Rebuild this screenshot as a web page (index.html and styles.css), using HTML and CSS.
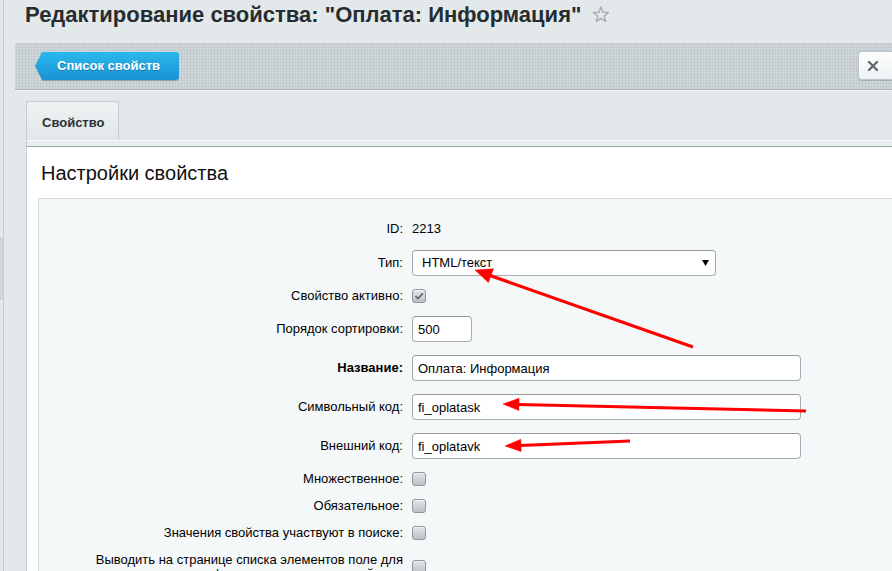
FILE: index.html
```html
<!DOCTYPE html>
<html lang="ru">
<head>
<meta charset="utf-8">
<title>Редактирование свойства</title>
<link rel="stylesheet" href="styles.css">
</head>
<body>
<div class="layout">
  <div class="edge"><div class="edge-mark"></div></div>
  <div class="main">
    <h1 class="title"><span class="title-text">Редактирование свойства: "Оплата: Информация"</span><svg class="star" width="18" height="18" viewBox="0 0 18 18"><polygon points="9,1 11,6.25 16.61,6.53 12.23,10.05 13.7,15.47 9,12.4 4.3,15.47 5.77,10.05 1.39,6.53 7,6.25" fill="none" stroke="#a3acb1" stroke-width="1.4" stroke-linejoin="round"/></svg></h1>

    <div class="toolbar">
      <a class="btn-back">Список свойств</a>
      <div class="btn-close">
        <svg width="12" height="12" viewBox="0 0 12 12"><path d="M2 2 L10 10 M10 2 L2 10" stroke="#5d6569" stroke-width="2.2" stroke-linecap="round"/></svg>
        <span class="btn-close-mark"></span>
      </div>
    </div>

    <div class="tabs"><div class="tab">Свойство</div></div>
    <div class="tab-strip"></div>

    <div class="panel">
      <h2 class="panel-title">Настройки свойства</h2>
      <div class="form-box">
        <div class="form">
          <div class="label">ID:</div>
          <div class="value">2213</div>

          <div class="label">Тип:</div>
          <div class="value"><div class="select">HTML/текст<svg class="select-arrow" width="7" height="6" viewBox="0 0 7 6"><polygon points="0,0 7,0 3.5,6" fill="#000"/></svg></div></div>

          <div class="label">Свойство активно:</div>
          <div class="value"><span class="cb cb-checked"><svg width="14" height="14" viewBox="0 0 14 14"><polyline points="3.5,7.2 6,9.6 10.8,4.4" fill="none" stroke="#5b656a" stroke-width="1.6"/></svg></span></div>

          <div class="label">Порядок сортировки:</div>
          <div class="value"><input class="input input-short" type="text" value="500" readonly></div>

          <div class="label label-bold">Название:</div>
          <div class="value"><input class="input input-wide" type="text" value="Оплата: Информация" readonly></div>

          <div class="label">Символьный код:</div>
          <div class="value"><input class="input input-wide" type="text" value="fi_oplatask" readonly></div>

          <div class="label">Внешний код:</div>
          <div class="value"><input class="input input-wide" type="text" value="fi_oplatavk" readonly></div>

          <div class="label">Множественное:</div>
          <div class="value"><span class="cb"></span></div>

          <div class="label">Обязательное:</div>
          <div class="value"><span class="cb"></span></div>

          <div class="label">Значения свойства участвуют в поиске:</div>
          <div class="value"><span class="cb"></span></div>

          <div class="label">Выводить на странице списка элементов поле для фильтрации по этому свойству:</div>
          <div class="value"><span class="cb"></span></div>
        </div>
      </div>
    </div>
  </div>
</div>

<svg class="annot" width="892" height="571" viewBox="0 0 892 571">
  <g fill="#ff0000" stroke="#ff0000">
    <line x1="693" y1="347" x2="490" y2="275.5" stroke-width="3.2"/>
    <polygon points="475,270 493.5,268.8 488.4,282.6" stroke-width="0.5"/>
    <line x1="806" y1="411" x2="518" y2="404.4" stroke-width="3"/>
    <polygon points="503,404 519.1,398.2 518.9,410.6" stroke-width="0.5"/>
    <line x1="630" y1="441" x2="520" y2="445.4" stroke-width="3"/>
    <polygon points="505,446 521.2,451.6 520.8,439.2" stroke-width="0.5"/>
  </g>
</svg>
</body>
</html>
```
FILE: styles.css
```css
html, body {
  margin: 0;
  padding: 0;
  overflow: hidden;
}

body {
  width: 892px;
  height: 571px;
  position: relative;
  background: #e3e9eb;
  font-family: "Liberation Sans", Arial, sans-serif;
  font-size: 13px;
  color: #000;
}

.layout {
  display: flex;
  min-height: 571px;
}

.edge {
  flex: none;
  width: 3px;
  border-right: 1px solid #c3cfd5;
  padding-top: 237px;
}

.edge-mark {
  height: 63px;
  background: #cfd6d9;
}

.main {
  flex: none;
  width: 899px;
  padding-left: 11px;
}

/* Title */
.title {
  margin: 0;
  padding-left: 10px;
  height: 30px;
  line-height: 30px;
  display: flex;
  align-items: center;
  font-family: "Liberation Sans", Arial, sans-serif;
  font-size: 22px;
  font-weight: bold;
  color: #262d31;
  white-space: nowrap;
}

.star {
  margin-left: 11px;
  flex: none;
}

/* Toolbar */
.toolbar {
  margin-top: 13px;
  height: 47px;
  box-sizing: border-box;
  border-bottom: 1px solid #a8b2b7;
  border-radius: 2px 2px 0 0;
  background-color: #cfd6d9;
  background-image: radial-gradient(circle, #b7c0c5 0.8px, transparent 1.1px);
  background-size: 3px 3px;
  box-shadow: 0 1px 0 #f1f4f5;
  display: flex;
  align-items: flex-start;
  justify-content: space-between;
  padding-left: 20px;
}

.btn-back {
  position: relative;
  margin-top: 9px;
  margin-left: 7px;
  height: 28px;
  line-height: 28px;
  padding: 0 19px 0 15px;
  border-radius: 0 3px 3px 0;
  background: linear-gradient(#2bb8ec, #1a92d3);
  box-shadow: 0 1px 1px rgba(0, 0, 0, 0.25);
  color: #fff;
  font-family: "Liberation Sans", Arial, sans-serif;
  font-size: 13px;
  font-weight: bold;
  text-shadow: 0 1px 0 rgba(0, 60, 110, 0.35);
  text-decoration: none;
}

.btn-back::before {
  content: "";
  position: absolute;
  left: -7px;
  top: 0;
  width: 7px;
  height: 28px;
  background: linear-gradient(#2bb8ec, #1a92d3);
  clip-path: polygon(100% 0, 100% 100%, 0 50%);
}

.btn-close {
  margin-top: 8px;
  width: 56px;
  height: 29px;
  box-sizing: border-box;
  border: 1px solid #bcc5c9;
  border-right: none;
  border-radius: 4px 0 0 4px;
  background: linear-gradient(#fdfefe, #eef2f3);
  box-shadow: 0 1px 1px rgba(0, 0, 0, 0.15);
  display: flex;
  align-items: center;
  padding-left: 8px;
  gap: 20px;
}

.btn-close-mark {
  width: 0;
  height: 0;
  border-left: 3px solid transparent;
  border-right: 3px solid transparent;
  border-top: 4px solid #e4a12c;
  margin-top: -8px;
}

/* Tabs */
.tabs {
  margin-top: 11px;
  margin-left: 11px;
  display: flex;
}

.tab {
  height: 39px;
  box-sizing: border-box;
  padding: 2px 13px 0 15px;
  border: 1px solid #c3ccd0;
  border-bottom: none;
  border-radius: 3px 3px 0 0;
  background: linear-gradient(#eef2f3, #e1e7e9);
  display: flex;
  align-items: center;
  font-weight: bold;
  font-size: 13px;
  color: #2b3135;
}

.tab-strip {
  margin-left: 11px;
  height: 7px;
  box-sizing: border-box;
  border-left: 1px solid #c3ccd0;
  border-top: 1px solid #f7f9f9;
  border-bottom: 1px solid #9aa4a9;
  background: #e9eef0;
}

/* Panel */
.panel {
  margin-left: 11px;
  background: #fff;
  border-left: 1px solid #c8d0d4;
  padding-top: 14px;
  min-height: 500px;
}

.panel-title {
  margin: 0 0 13px 14px;
  font-size: 20px;
  line-height: 24px;
  font-weight: normal;
  color: #111;
}

.form-box {
  margin-left: 11px;
  background: #f5f8f9;
  border-top: 1px solid #d3dbdf;
  border-left: 1px solid #d3dbdf;
  padding-top: 22px;
  min-height: 400px;
}

.form {
  display: grid;
  grid-template-columns: 364px 1fr;
  column-gap: 9px;
  row-gap: 13px;
  align-items: center;
}

.label {
  text-align: right;
  line-height: 14px;
  color: #000;
}

.label-bold {
  font-weight: bold;
}

.value {
  display: flex;
  align-items: center;
  line-height: 16px;
  min-height: 14px;
}

.select {
  width: 304px;
  height: 26px;
  box-sizing: border-box;
  border: 1px solid #a6adb2;
  border-top-color: #939a9f;
  border-radius: 4px;
  background: #fff;
  padding-left: 9px;
  padding-right: 6px;
  display: flex;
  align-items: center;
  justify-content: space-between;
  font-size: 13px;
}

.input {
  height: 26px;
  box-sizing: border-box;
  border: 1px solid #a6adb2;
  border-top-color: #939a9f;
  border-radius: 4px;
  background: #fff;
  padding: 0 5px;
  margin: 0;
  font-family: "Liberation Sans", Arial, sans-serif;
  font-size: 13px;
  color: #000;
  outline: none;
  display: block;
}

.input-short {
  width: 60px;
}

.input-wide {
  width: 389px;
}

.cb {
  display: block;
  width: 14px;
  height: 14px;
  box-sizing: border-box;
  border: 1px solid #8f979b;
  border-radius: 3px;
  background: linear-gradient(#e3e6e8, #bcc2c5);
  box-shadow: inset 0 1px 0 rgba(255, 255, 255, 0.6);
  position: relative;
}

.cb svg {
  position: absolute;
  left: -1px;
  top: -1px;
}

/* Annotation arrows overlay */
.annot {
  position: absolute;
  left: 0;
  top: 0;
  pointer-events: none;
}
```
